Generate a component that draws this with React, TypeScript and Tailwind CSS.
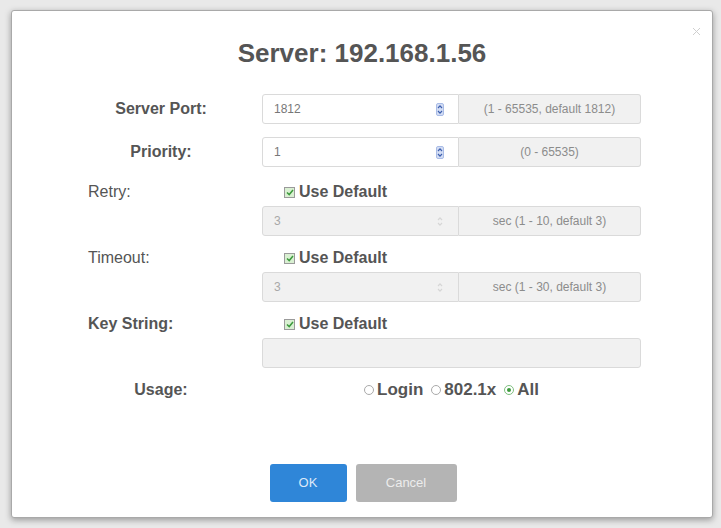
import React from "react";
import clsx from "clsx";

function Spinner({ disabled }: { disabled?: boolean }) {
    return (
        <svg width="8" height="13" viewBox="0 0 8 13">
            {!disabled && <rect x="0.5" y="0.5" width="7" height="12" rx="1.5" fill="#d3ddf4" stroke="#a9bce6" />}
            <path d="M2 5 L4 2.8 L6 5" fill="none" stroke={disabled ? "#d6d6d6" : "#3d5fae"} strokeWidth="1.2" />
            <path d="M2 8 L4 10.2 L6 8" fill="none" stroke={disabled ? "#d6d6d6" : "#3d5fae"} strokeWidth="1.2" />
        </svg>
    );
}

function NumberField({ value, hint, disabled }: { value: string; hint: string; disabled?: boolean }) {
    return (
        <div className="flex h-[30px] w-[379px]">
            <div
                className={clsx(
                    "flex flex-1 items-center justify-between rounded-l-[3px] border border-[#dadada] pl-[11px] pr-[14px] text-[12px]",
                    disabled ? "bg-[#f1f1f1] text-[#a8a8a8]" : "bg-white text-[#777]"
                )}
            >
                <span>{value}</span>
                <Spinner disabled={disabled} />
            </div>
            <div className="flex w-[182px] items-center justify-center rounded-r-[3px] border border-l-0 border-[#dadada] bg-[#f1f1f1] text-[12px] text-[#8c8c8c]">
                {hint}
            </div>
        </div>
    );
}

function UseDefault() {
    return (
        <div className="flex h-[20px] items-center gap-[4px] pl-[22px] text-[16px] font-bold text-[#555]">
            <span className="flex h-[11px] w-[11px] items-center justify-center border border-[#9a9a9a] bg-[#d9f0d2]">
                <svg width="8" height="7" viewBox="0 0 8 7">
                    <path d="M1 3.5 L3.2 5.6 L7 1" fill="none" stroke="#3c9a3c" strokeWidth="1.5" />
                </svg>
            </span>
            <span>Use Default</span>
        </div>
    );
}

function Radio({ label, checked }: { label: string; checked?: boolean }) {
    return (
        <label className="flex items-center gap-[3px]">
            <span
                className={clsx(
                    "flex h-[10px] w-[10px] items-center justify-center rounded-full border bg-white",
                    checked ? "border-[#7fbf7f]" : "border-[#aaa]"
                )}
            >
                {checked && <span className="h-[4px] w-[4px] rounded-full bg-[#3c9a3c]" />}
            </span>
            <span>{label}</span>
        </label>
    );
}

const rowLabel = "w-[150px] text-[16px] text-[#555]";

export default function App() {
    return (
        <div
            className="h-[528px] w-[721px] overflow-hidden bg-[#e9e9e9] pl-[11px] pt-[10px]"
            style={{ fontFamily: '"Liberation Sans", Arial, sans-serif' }}
        >
            <div className="relative h-[508px] w-[702px] rounded-[3px] border border-[#a9a9a9] bg-white shadow-[0_2px_6px_rgba(0,0,0,0.35)]">
                {/* close */}
                <button className="absolute right-[11px] top-[16px]">
                    <svg width="9" height="9" viewBox="0 0 9 9">
                        <path d="M1 1 L8 8 M8 1 L1 8" stroke="#cfcfcf" strokeWidth="1" />
                    </svg>
                </button>

                <h1 className="pt-[27px] text-center text-[26px] font-bold leading-[30px] text-[#555]">
                    Server: 192.168.1.56
                </h1>

                <div className="pl-[74px]">
                    {/* server port */}
                    <div className="mt-[26px] flex items-center">
                        <div className={clsx(rowLabel, "text-center font-bold")}>Server Port:</div>
                        <div className="ml-[26px]">
                            <NumberField value="1812" hint="(1 - 65535, default 1812)" />
                        </div>
                    </div>

                    {/* priority */}
                    <div className="mt-[13px] flex items-center">
                        <div className={clsx(rowLabel, "text-center font-bold")}>Priority:</div>
                        <div className="ml-[26px]">
                            <NumberField value="1" hint="(0 - 65535)" />
                        </div>
                    </div>

                    {/* retry */}
                    <div className="mt-[15px] flex items-start">
                        <div className={clsx(rowLabel, "pl-[2px] leading-[20px]")}>Retry:</div>
                        <div className="ml-[26px]">
                            <UseDefault />
                            <div className="mt-[4px]">
                                <NumberField value="3" hint="sec (1 - 10, default 3)" disabled />
                            </div>
                        </div>
                    </div>

                    {/* timeout */}
                    <div className="mt-[12px] flex items-start">
                        <div className={clsx(rowLabel, "pl-[2px] leading-[20px]")}>Timeout:</div>
                        <div className="ml-[26px]">
                            <UseDefault />
                            <div className="mt-[4px]">
                                <NumberField value="3" hint="sec (1 - 30, default 3)" disabled />
                            </div>
                        </div>
                    </div>

                    {/* key string */}
                    <div className="mt-[12px] flex items-start">
                        <div className={clsx(rowLabel, "pl-[2px] font-bold leading-[20px]")}>Key String:</div>
                        <div className="ml-[26px]">
                            <UseDefault />
                            <div className="mt-[4px] h-[30px] w-[379px] rounded-[3px] border border-[#dadada] bg-[#f1f1f1]" />
                        </div>
                    </div>

                    {/* usage */}
                    <div className="mt-[12px] flex h-[20px] items-center">
                        <div className={clsx(rowLabel, "text-center font-bold")}>Usage:</div>
                        <div className="ml-[26px] flex w-[379px] items-center justify-center gap-[8px] text-[17px] font-bold text-[#555]">
                            <Radio label="Login" />
                            <Radio label="802.1x" />
                            <Radio label="All" checked />
                        </div>
                    </div>
                </div>

                {/* buttons */}
                <div className="mt-[64px] flex justify-center gap-[9px] pl-[2px]">
                    <button className="h-[38px] w-[77px] rounded-[3px] bg-[#2f86d8] text-[13px] text-[#dce9f8]">
                        OK
                    </button>
                    <button className="h-[38px] w-[101px] rounded-[3px] bg-[#b4b4b4] text-[13px] text-[#ececec]">
                        Cancel
                    </button>
                </div>
            </div>
        </div>
    );
}
